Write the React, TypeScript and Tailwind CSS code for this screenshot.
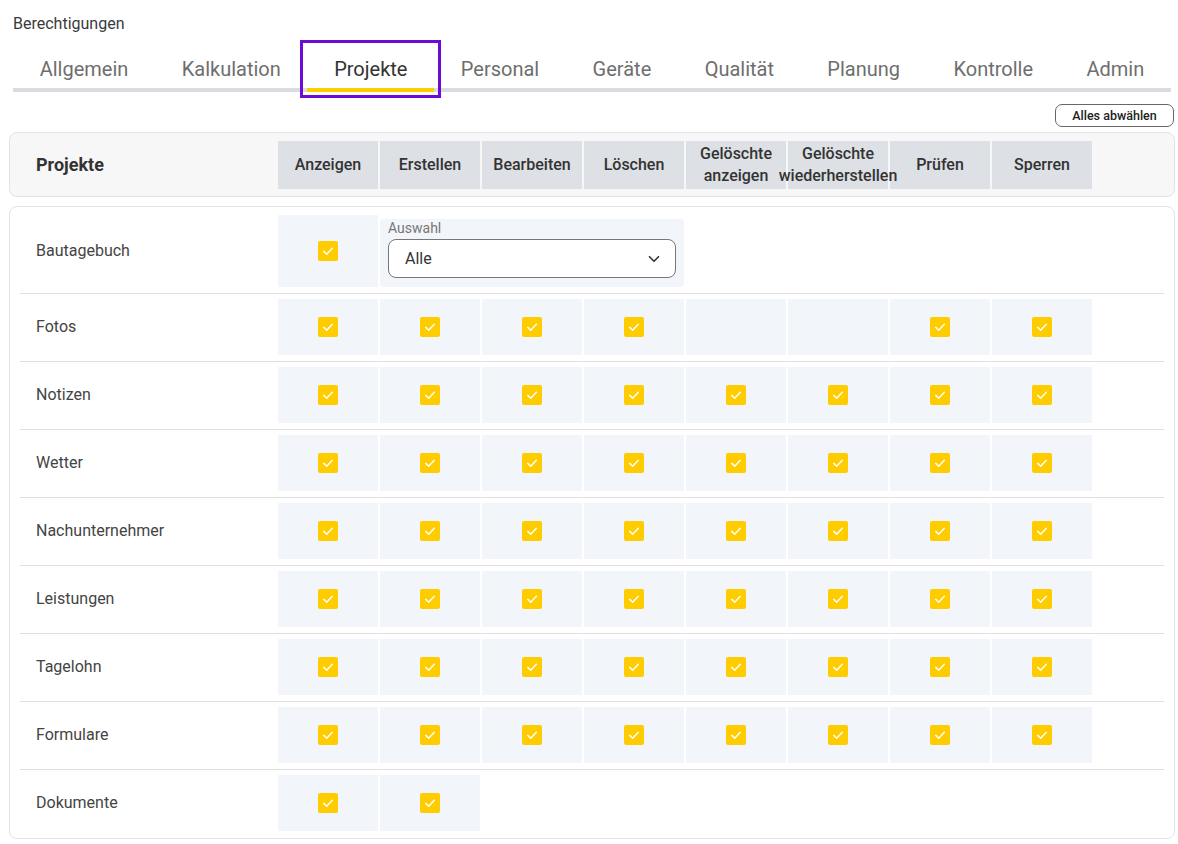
import { ChevronDown } from "lucide-react";

const tabs = ["Allgemein", "Kalkulation", "Projekte", "Personal", "Geräte", "Qualität", "Planung", "Kontrolle", "Admin"];

const columns: string[][] = [
  ["Anzeigen"],
  ["Erstellen"],
  ["Bearbeiten"],
  ["Löschen"],
  ["Gelöschte", "anzeigen"],
  ["Gelöschte", "wiederherstellen"],
  ["Prüfen"],
  ["Sperren"],
];

// 1 = Haken, 0 = leere Zelle
const rows: { label: string; cells: number[] }[] = [
  { label: "Fotos", cells: [1, 1, 1, 1, 0, 0, 1, 1] },
  { label: "Notizen", cells: [1, 1, 1, 1, 1, 1, 1, 1] },
  { label: "Wetter", cells: [1, 1, 1, 1, 1, 1, 1, 1] },
  { label: "Nachunternehmer", cells: [1, 1, 1, 1, 1, 1, 1, 1] },
  { label: "Leistungen", cells: [1, 1, 1, 1, 1, 1, 1, 1] },
  { label: "Tagelohn", cells: [1, 1, 1, 1, 1, 1, 1, 1] },
  { label: "Formulare", cells: [1, 1, 1, 1, 1, 1, 1, 1] },
  { label: "Dokumente", cells: [1, 1] },
];

function Check() {
  return (
    <span className="flex h-[20px] w-[20px] items-center justify-center rounded-[2px] bg-[#ffcc00]">
      <svg width="20" height="20" viewBox="0 0 20 20" fill="none">
        <path d="M5.8 10.4l2.9 2.8 5.6-5.9" stroke="white" strokeWidth="1.5" strokeLinecap="round" strokeLinejoin="round" />
      </svg>
    </span>
  );
}

function Cell({ checked, tall }: { checked: boolean; tall?: boolean }) {
  return (
    <div className={`flex w-[100px] items-center justify-center bg-[#f2f5fa] ${tall ? "h-[72px]" : "h-[56px]"}`}>
      {checked && <Check />}
    </div>
  );
}

export default function App() {
  return (
    <div className="min-h-[844px] w-[1178px] bg-white font-['Roboto',sans-serif] text-[#333]">
      <div className="pl-[13px] pt-[14px] text-[16px] leading-[19px] text-[#3a3a3a]">Berechtigungen</div>

      <div className="mx-[13px] mt-[7px] flex w-[1158px] border-b-[4px] border-[#d9dce0]">
        {tabs.map((t) => {
          const active = t === "Projekte";
          return (
            <div
              key={t}
              className={`relative -mb-[4px] shrink-0 border-b-[4px] px-[26.7px] pb-[7px] pt-[17px] text-[20px] leading-[24px] ${
                active ? "border-[#ffcc00] text-[#333]" : "border-transparent text-[#6e6e6e]"
              }`}
            >
              {t}
              {active && (
                <span className="absolute -bottom-[10px] -left-[7px] -right-[7px] top-0 border-[3px] border-[#6b0bd4]" />
              )}
            </div>
          );
        })}
      </div>

      <div className="mt-[12px] flex justify-end pr-[4px]">
        <button
          type="button"
          className="h-[23px] w-[119px] rounded-[7px] border border-[#666] bg-white text-[12.5px] font-medium leading-[20px] text-[#222]"
        >
          Alles abwählen
        </button>
      </div>

      <div className="ml-[9px] mt-[5px] flex h-[65px] w-[1166px] items-center rounded-[8px] border border-[#e1e3e6] bg-[#f7f7f7]">
        <div className="w-[268px] pl-[26px] text-[18px] font-bold text-[#333]">Projekte</div>
        <div className="flex gap-[2px]">
          {columns.map((c) => (
            <div
              key={c.join(" ")}
              className="flex h-[48px] w-[100px] flex-col items-center justify-center bg-[#dde0e5] text-[16px] font-medium leading-[22px] text-[#333]"
            >
              {c.map((l) => (
                <span key={l} className="relative z-10 whitespace-nowrap">
                  {l}
                </span>
              ))}
            </div>
          ))}
        </div>
      </div>

      <div className="ml-[9px] mt-[9px] w-[1166px] rounded-[8px] border border-[#e1e3e6] bg-white px-[10px]">
        <div className="flex items-center pb-[6px] pt-[8px]">
          <div className="w-[258px] pl-[16px] text-[16px] text-[#444]">Bautagebuch</div>
          <div className="flex gap-[2px]">
            <Cell checked tall />
            <div className="h-[68px] w-[304px] self-end rounded-[4px] bg-[#f2f5fa] px-[8px] pb-[9px] pt-[1px]">
              <div className="text-[14px] leading-[16px] text-[#777]">Auswahl</div>
              <div className="mt-[3px] flex h-[39px] items-center justify-between rounded-[8px] border border-[#777] bg-white pl-[16px] pr-[12px]">
                <span className="text-[16px] text-[#333]">Alle</span>
                <ChevronDown className="h-[18px] w-[18px] text-[#333]" strokeWidth={2.2} />
              </div>
            </div>
          </div>
        </div>

        {rows.map((r, i) => (
          <div
            key={r.label}
            className={`flex items-center border-t border-[#e0e0e0] pt-[5px] ${i === rows.length - 1 ? "pb-[7px]" : "pb-[6px]"}`}
          >
            <div className="w-[258px] pl-[16px] text-[16px] text-[#444]">{r.label}</div>
            <div className="flex gap-[2px]">
              {r.cells.map((c, j) => (
                <Cell key={j} checked={c === 1} />
              ))}
            </div>
          </div>
        ))}
      </div>
    </div>
  );
}
